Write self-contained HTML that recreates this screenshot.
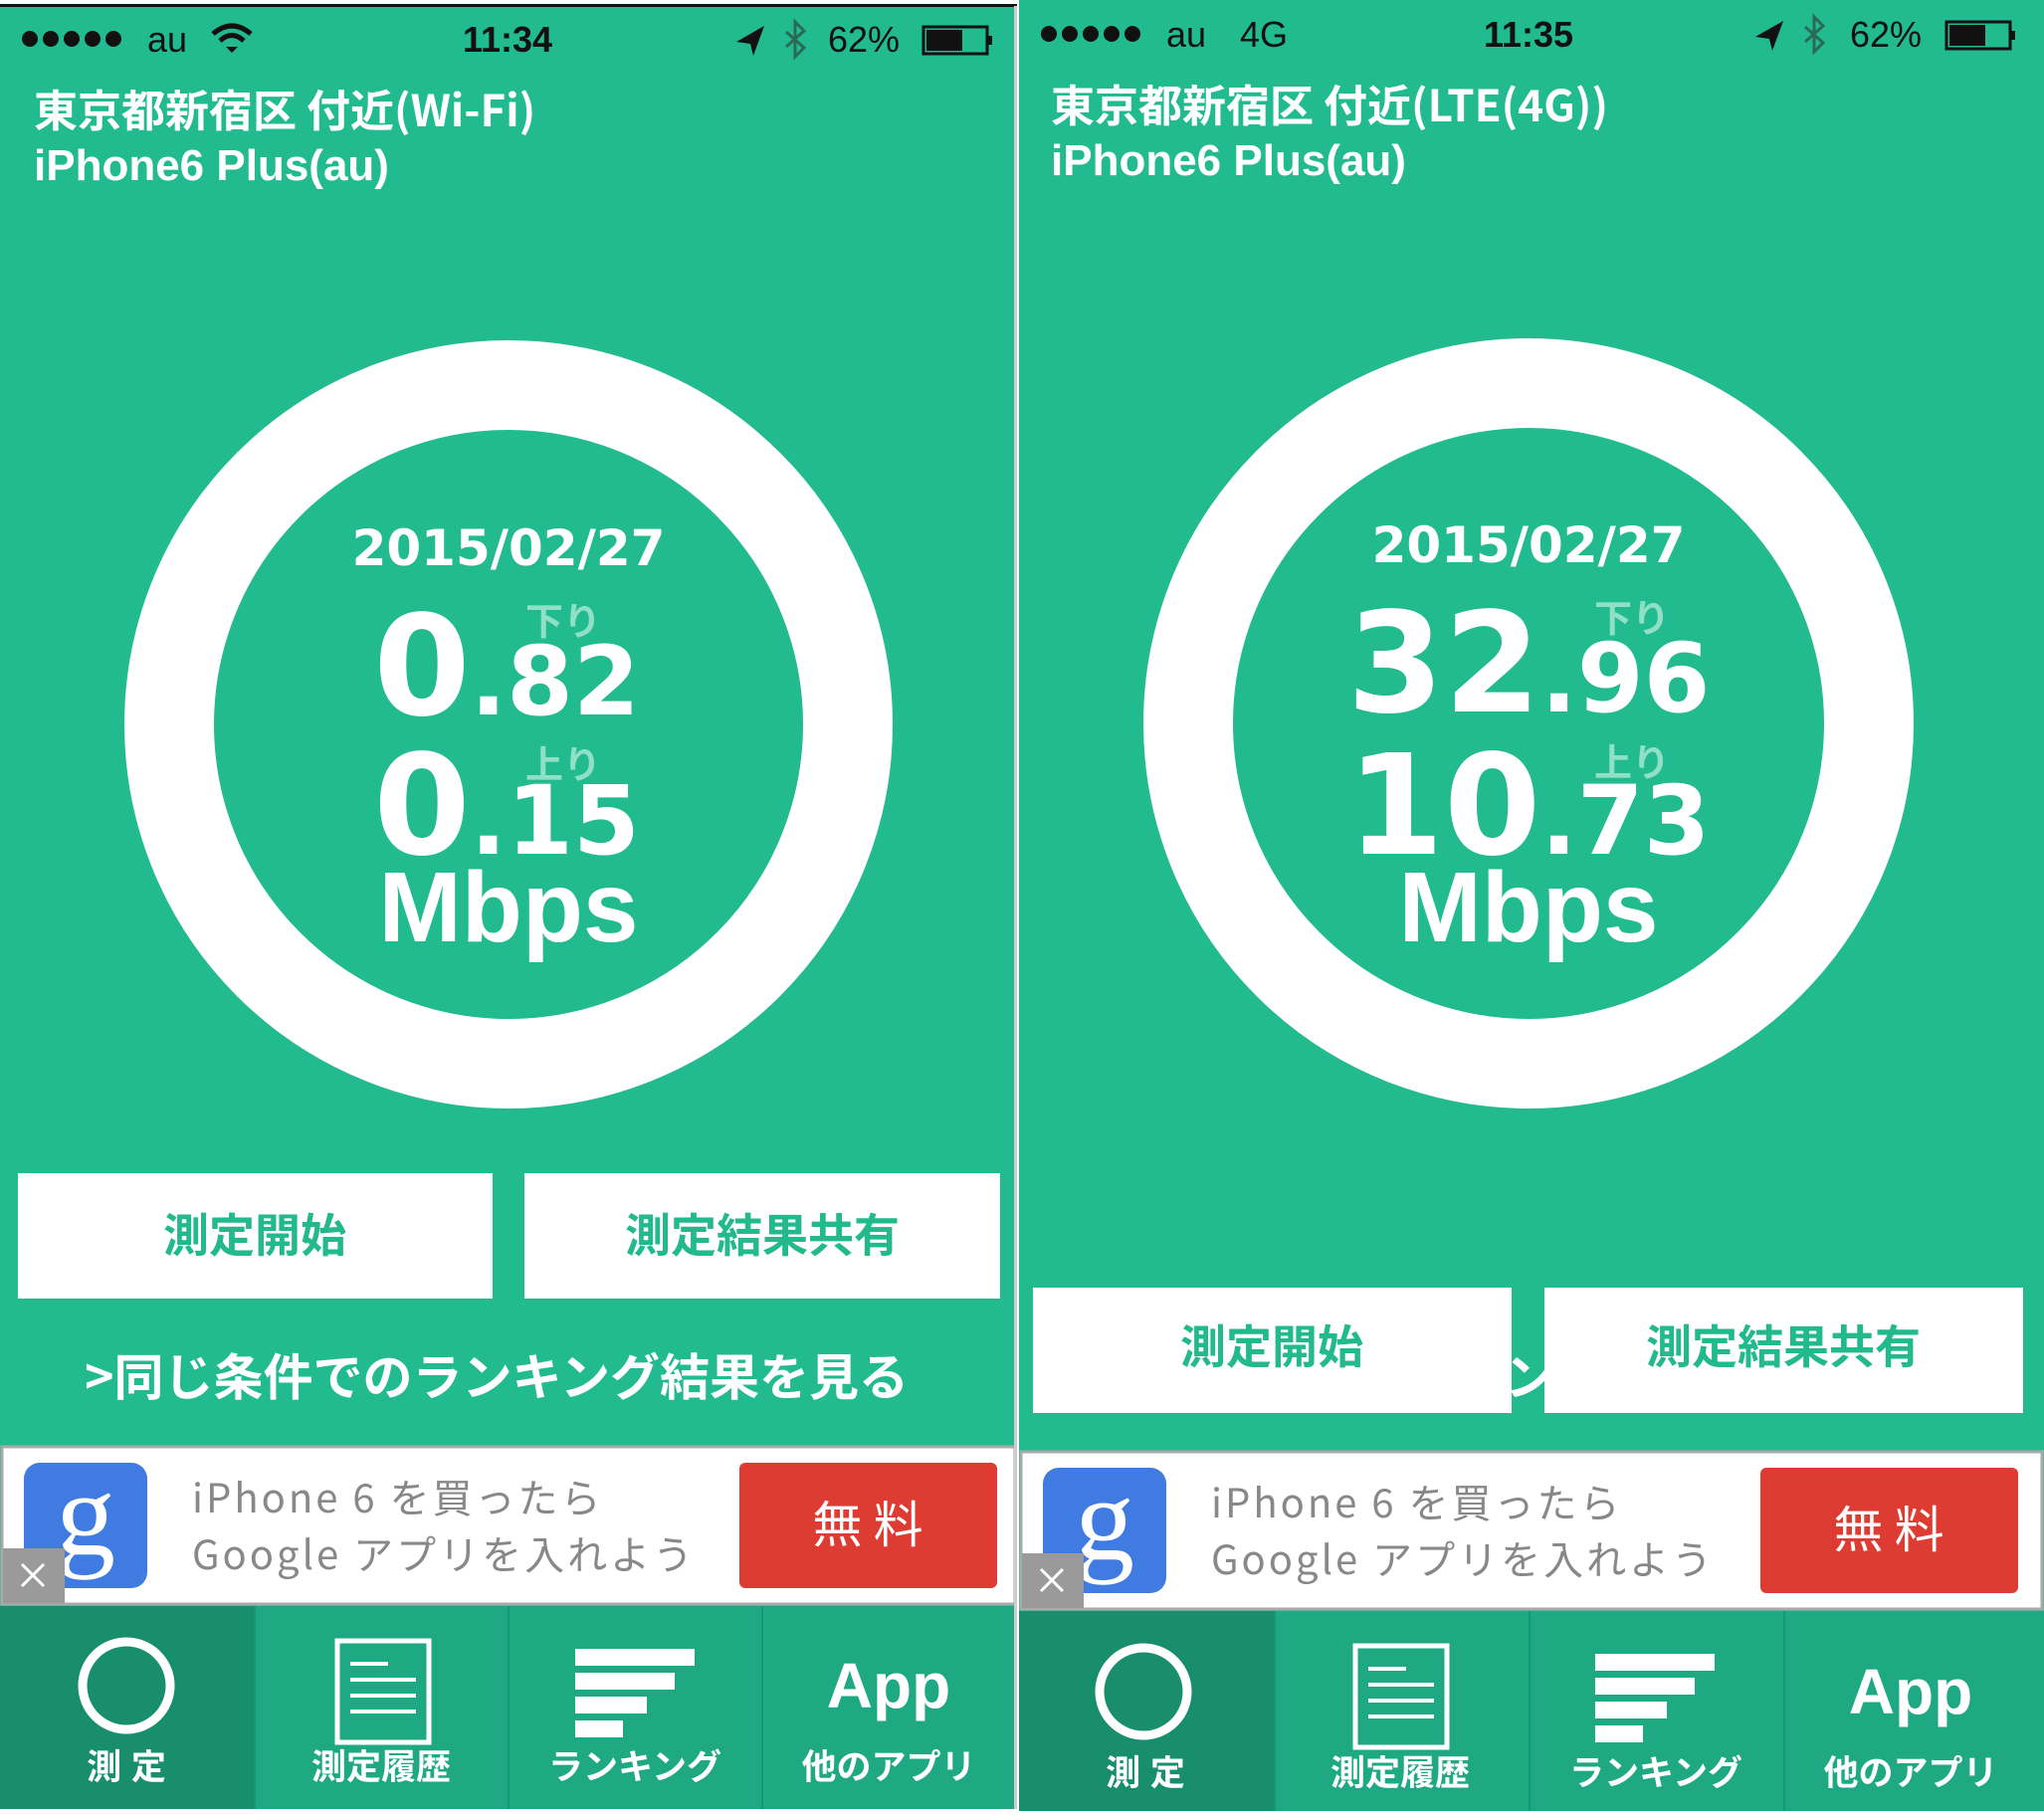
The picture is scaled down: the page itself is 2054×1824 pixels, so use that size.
<!DOCTYPE html>
<html><head><meta charset="utf-8"><style>
html,body{margin:0;padding:0;background:#fff;width:2054px;height:1824px;overflow:hidden}
svg{position:absolute;top:0}
text{font-family:"Liberation Sans","Noto Sans CJK JP",sans-serif}
.jp{font-family:"Noto Sans CJK JP","Liberation Sans",sans-serif}
.dv{font-family:"DejaVu Sans","Liberation Sans",sans-serif}
.gs{font-family:"Liberation Serif",serif}
</style></head><body>

<svg style="left:0" width="1022" height="1824" viewBox="0 0 1022 1824">
<rect x="0" y="6" width="1022" height="1812" fill="#21bb8f"/>
<rect x="0" y="4" width="1022" height="3" fill="#111"/>
<g fill="#111"><circle cx="30" cy="39" r="8"/><circle cx="51" cy="39" r="8"/><circle cx="72" cy="39" r="8"/><circle cx="93" cy="39" r="8"/><circle cx="114" cy="39" r="8"/></g>
<text x="148" y="52" font-size="36" fill="#111">au</text>
<g fill="none" stroke="#111" stroke-width="5"><path d="M214 34 Q233 18 252 34"/><path d="M221 41 Q233 30 245 41"/></g><path d="M227 47 L233 53 L239 47 Z" fill="#111"/>
<text x="510" y="52" font-size="36" font-weight="bold" fill="#111" text-anchor="middle">11:34</text>
<path d="M740 42 L768 26 L757 56 L754 44 Z" fill="#111"/>
<path d="M790 32 L808 48 L799 57 L799 22 L808 31 L790 47" fill="none" stroke="#2a6a55" stroke-width="3"/>
<text x="832" y="52" font-size="36" fill="#111">62%</text>
<rect x="928" y="27" width="64" height="27" fill="none" stroke="#111" stroke-width="3"/><rect x="931" y="30" width="36" height="21" fill="#111"/><rect x="993" y="36" width="4" height="9" fill="#111"/>
<text x="34" y="127" font-size="44" font-weight="bold" fill="#fff" class="jp">東京都新宿区 付近(Wi-Fi)</text>
<text x="34" y="181" font-size="44" font-weight="bold" fill="#fff">iPhone6 Plus(au)</text>
<circle cx="511" cy="728" r="341" fill="none" stroke="#fff" stroke-width="90"/>
<text x="511" y="568" font-size="50" font-weight="bold" fill="#fff" text-anchor="middle" class="dv">2015/02/27</text>
<text x="509" y="718" font-weight="bold" fill="#fff" text-anchor="middle" class="dv"><tspan font-size="140">0</tspan><tspan font-size="96">.82</tspan></text>
<text x="566" y="638" font-size="38" font-weight="bold" fill="#8fe0c5" text-anchor="middle" class="jp">下り</text>
<text x="509" y="858" font-weight="bold" fill="#fff" text-anchor="middle" class="dv"><tspan font-size="140">0</tspan><tspan font-size="96">.15</tspan></text>
<text x="566" y="782" font-size="38" font-weight="bold" fill="#8fe0c5" text-anchor="middle" class="jp">上り</text>
<text x="511" y="946" font-size="100" font-weight="bold" fill="#fff" text-anchor="middle">Mbps</text>
<rect x="18" y="1179" width="477" height="126" fill="#fff"/><rect x="527" y="1179" width="478" height="126" fill="#fff"/>
<text x="256" y="1258" font-size="46" font-weight="bold" fill="#22b98c" text-anchor="middle" class="jp">測定開始</text>
<text x="766" y="1258" font-size="46" font-weight="bold" fill="#22b98c" text-anchor="middle" class="jp">測定結果共有</text>
<text x="85" y="1402" font-size="50" font-weight="bold" fill="#fff" class="jp">&gt;同じ条件でのランキング結果を見る</text>
<g>
<rect x="2" y="1454" width="1018" height="158" fill="#fff" stroke="#aaa" stroke-width="3"/>
<rect x="24" y="1470" width="124" height="126" rx="16" fill="#3f7be0"/>
<text x="86" y="1562" font-size="120" fill="#fff" text-anchor="middle" class="gs">g</text>
<text x="193" y="1520" font-size="40" fill="#888" class="jp" letter-spacing="3">iPhone 6 を買ったら</text>
<text x="193" y="1577" font-size="40" fill="#888" class="jp" letter-spacing="3">Google アプリを入れよう</text>
<rect x="743" y="1470" width="259" height="126" rx="6" fill="#de3b32"/>
<text x="872" y="1550" font-size="50" fill="#fff" text-anchor="middle" class="jp">無 料</text>
<rect x="3" y="1556" width="62" height="55" fill="#9a9a9a"/>
<path d="M22 1572 L44 1594 M44 1572 L22 1594" stroke="#fff" stroke-width="3"/>
</g>
<rect x="0" y="1614" width="1022" height="204" fill="#1fa983"/>
<rect x="0" y="1614" width="255" height="204" fill="#198e6d"/>
<g fill="#17977a"><rect x="255" y="1614" width="2" height="204"/><rect x="510" y="1614" width="2" height="204"/><rect x="765" y="1614" width="2" height="204"/></g>
<circle cx="127" cy="1694" r="44" fill="none" stroke="#fff" stroke-width="9"/>
<rect x="339" y="1649" width="92" height="102" fill="none" stroke="#fff" stroke-width="5"/>
<g fill="#fff"><rect x="352" y="1670" width="38" height="4"/><rect x="352" y="1686" width="66" height="4"/><rect x="352" y="1702" width="66" height="4"/><rect x="352" y="1718" width="66" height="4"/></g>
<g fill="#fff"><rect x="578" y="1657" width="120" height="17"/><rect x="578" y="1681" width="100" height="17"/><rect x="578" y="1705" width="72" height="17"/><rect x="578" y="1729" width="48" height="17"/></g>
<text x="893" y="1716" font-size="64" font-weight="bold" fill="#fff" text-anchor="middle">App</text>
<g font-size="35" font-weight="bold" fill="#fff" text-anchor="middle" class="jp">
<text x="127" y="1788">測 定</text><text x="383" y="1788">測定履歴</text><text x="638" y="1788">ランキング</text><text x="893" y="1788">他のアプリ</text></g>
<rect x="1019" y="6" width="3" height="1812" fill="#ccc"/>
</svg>

<svg style="left:1024px" width="1030" height="1824" viewBox="0 0 1030 1824">
<rect x="0" y="0" width="1030" height="1820" fill="#21bb8f"/>
<g fill="#111"><circle cx="30" cy="34" r="8"/><circle cx="51" cy="34" r="8"/><circle cx="72" cy="34" r="8"/><circle cx="93" cy="34" r="8"/><circle cx="114" cy="34" r="8"/></g>
<text x="148" y="47" font-size="36" fill="#111">au</text>
<text x="222" y="47" font-size="36" fill="#111">4G</text>
<text x="512" y="47" font-size="36" font-weight="bold" fill="#111" text-anchor="middle">11:35</text>
<path d="M740 37 L768 21 L757 51 L754 39 Z" fill="#111"/>
<path d="M790 27 L808 43 L799 52 L799 17 L808 26 L790 42" fill="none" stroke="#2a6a55" stroke-width="3"/>
<text x="835" y="47" font-size="36" fill="#111">62%</text>
<rect x="932" y="22" width="64" height="27" fill="none" stroke="#111" stroke-width="3"/><rect x="935" y="25" width="36" height="21" fill="#111"/><rect x="997" y="31" width="4" height="9" fill="#111"/>
<text x="32" y="122" font-size="44" font-weight="bold" fill="#fff" class="jp">東京都新宿区 付近(LTE(4G))</text>
<text x="32" y="176" font-size="44" font-weight="bold" fill="#fff">iPhone6 Plus(au)</text>
<circle cx="512" cy="727" r="342" fill="none" stroke="#fff" stroke-width="90"/>
<text x="512" y="565" font-size="50" font-weight="bold" fill="#fff" text-anchor="middle" class="dv">2015/02/27</text>
<text x="512" y="715" font-weight="bold" fill="#fff" text-anchor="middle" class="dv"><tspan font-size="140">32</tspan><tspan font-size="96">.96</tspan></text>
<text x="616" y="635" font-size="38" font-weight="bold" fill="#8fe0c5" text-anchor="middle" class="jp">下り</text>
<text x="512" y="858" font-weight="bold" fill="#fff" text-anchor="middle" class="dv"><tspan font-size="140">10</tspan><tspan font-size="96">.73</tspan></text>
<text x="616" y="780" font-size="38" font-weight="bold" fill="#8fe0c5" text-anchor="middle" class="jp">上り</text>
<text x="512" y="946" font-size="100" font-weight="bold" fill="#fff" text-anchor="middle">Mbps</text>
<text x="488" y="1402" font-size="50" font-weight="bold" fill="#fff" class="jp">ン</text>
<rect x="14" y="1294" width="481" height="126" fill="#fff"/><rect x="528" y="1294" width="481" height="126" fill="#fff"/>
<text x="254" y="1370" font-size="46" font-weight="bold" fill="#22b98c" text-anchor="middle" class="jp">測定開始</text>
<text x="768" y="1370" font-size="46" font-weight="bold" fill="#22b98c" text-anchor="middle" class="jp">測定結果共有</text>
<g transform="translate(0,5)">
<rect x="2" y="1454" width="1026" height="158" fill="#fff" stroke="#aaa" stroke-width="3"/>
<rect x="24" y="1470" width="124" height="126" rx="16" fill="#3f7be0"/>
<text x="86" y="1562" font-size="120" fill="#fff" text-anchor="middle" class="gs">g</text>
<text x="193" y="1520" font-size="40" fill="#888" class="jp" letter-spacing="3">iPhone 6 を買ったら</text>
<text x="193" y="1577" font-size="40" fill="#888" class="jp" letter-spacing="3">Google アプリを入れよう</text>
<rect x="745" y="1470" width="259" height="126" rx="6" fill="#de3b32"/>
<text x="874" y="1550" font-size="50" fill="#fff" text-anchor="middle" class="jp">無 料</text>
<rect x="3" y="1556" width="62" height="55" fill="#9a9a9a"/>
<path d="M22 1572 L44 1594 M44 1572 L22 1594" stroke="#fff" stroke-width="3"/>
</g>
<rect x="0" y="1619" width="1030" height="201" fill="#1fa983"/>
<rect x="0" y="1619" width="256" height="201" fill="#198e6d"/>
<g fill="#17977a"><rect x="256" y="1619" width="2" height="201"/><rect x="512" y="1619" width="2" height="201"/><rect x="768" y="1619" width="2" height="201"/></g>
<circle cx="125" cy="1700" r="44" fill="none" stroke="#fff" stroke-width="9"/>
<rect x="338" y="1654" width="92" height="102" fill="none" stroke="#fff" stroke-width="5"/>
<g fill="#fff"><rect x="351" y="1675" width="38" height="4"/><rect x="351" y="1691" width="66" height="4"/><rect x="351" y="1707" width="66" height="4"/><rect x="351" y="1723" width="66" height="4"/></g>
<g fill="#fff"><rect x="579" y="1662" width="120" height="17"/><rect x="579" y="1686" width="100" height="17"/><rect x="579" y="1710" width="72" height="17"/><rect x="579" y="1734" width="48" height="17"/></g>
<text x="896" y="1722" font-size="64" font-weight="bold" fill="#fff" text-anchor="middle">App</text>
<g font-size="35" font-weight="bold" fill="#fff" text-anchor="middle" class="jp">
<text x="127" y="1794">測 定</text><text x="383" y="1794">測定履歴</text><text x="640" y="1794">ランキング</text><text x="896" y="1794">他のアプリ</text></g>
</svg>
</body></html>
